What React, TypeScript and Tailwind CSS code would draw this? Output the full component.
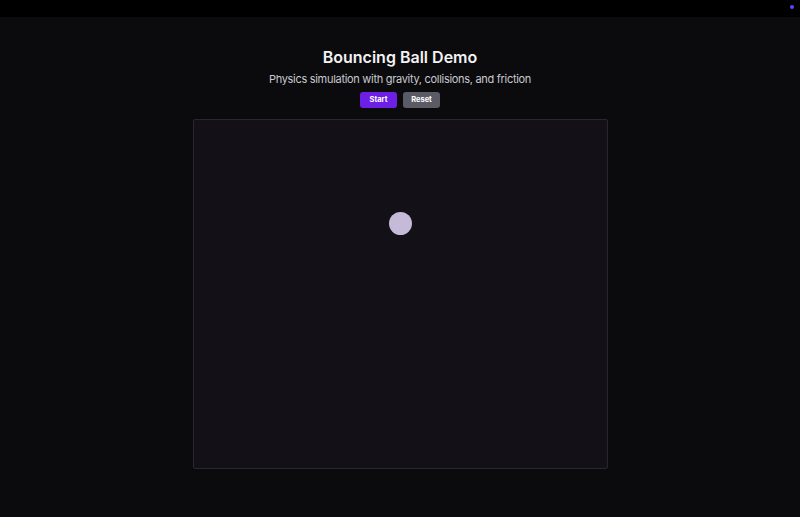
import { useState } from 'react'

const App = () => {
  const [running, setRunning] = useState(false)

  return (
    <div className="min-h-[517px] bg-[#0b0b0d] flex flex-col" style={{ fontFamily: 'Inter, "Noto Sans", sans-serif' }}>
      <div className="h-[17px] bg-black flex justify-end items-center pr-[6px]">
        <div className="w-[4px] h-[4px] rounded-full bg-[#5a48ff] -mt-[3px]" />
      </div>

      <div className="flex flex-col items-center pt-[29px]">
        <h1 className="text-[16px] leading-[22px] font-semibold text-[#f2f2f4]">Bouncing Ball Demo</h1>
        <p className="mt-[3px] text-[11px] leading-[16px] tracking-[-0.3px] text-[#c9c9cf]">
          Physics simulation with gravity, collisions, and friction
        </p>

        <div className="mt-[5px] flex gap-[6px]">
          <button
            onClick={() => setRunning(!running)}
            className="w-[37px] h-[16px] rounded-[3px] bg-[#6d1fe6] text-white text-[7.5px] font-bold leading-none"
          >
            {running ? 'Stop' : 'Start'}
          </button>
          <button className="w-[37px] h-[16px] rounded-[3px] bg-[#5b5b65] text-white text-[7.5px] font-bold leading-none">
            Reset
          </button>
        </div>

        <div className="mt-[11px] w-[415px] h-[350px] rounded-[2px] border border-[#29272e] bg-[#131117] flex justify-center pt-[92px]">
          <div className="w-[23px] h-[23px] rounded-full bg-[#c5bbd9]" />
        </div>
      </div>
    </div>
  )
}

export default App
